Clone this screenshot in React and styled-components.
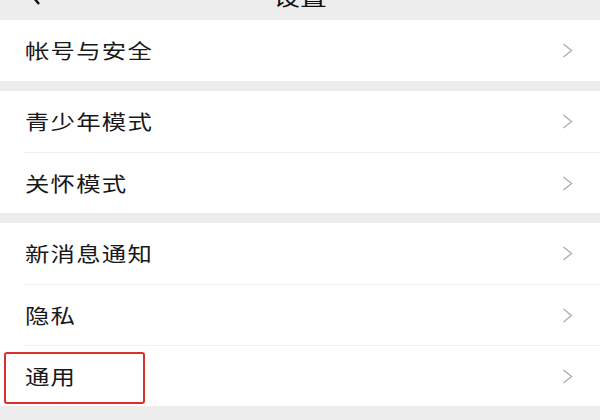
import React from 'react'
import styled, {createGlobalStyle} from 'styled-components'

const Global = createGlobalStyle`
  body {
    margin: 0;
    background: #ededed;
    font-family: "Noto Sans CJK SC", "Noto Sans", sans-serif;
  }
`

const Page = styled.div`
  width: 600px;
  height: 420px;
  overflow: hidden;
  background: #ededed;
`

// top bar, only its lower edge is in view
const Header = styled.div`
  height: 20px;
  overflow: hidden;
  display: flex;
  align-items: flex-end;
  padding: 0 0 14px 27px;
  box-sizing: border-box;
`

const Side = styled.div`
  flex: 1;
  display: flex;
  align-items: flex-end;
`

const Back = styled.svg`
  display: block;
  flex-shrink: 0;
  margin-bottom: 1px;
`

const Title = styled.div`
  font-size: 22px;
  line-height: 22px;
  color: #111;
  transform: scaleX(1.22);
  margin-left: -27px;
`

const Group = styled.div`
  background: #fff;
  margin-top: ${p => (p.$first ? '0' : '10px')};
`

const Row = styled.div`
  position: relative;
  padding-left: 24px;
`

const Inner = styled.div`
  height: 61px;
  box-sizing: border-box;
  display: flex;
  align-items: center;
  justify-content: space-between;
  padding: 0 27px 0 1px;
  border-top: ${p => (p.$divider ? '1px solid #efefef' : 'none')};
`

const Label = styled.span`
  font-size: 20px;
  letter-spacing: 1px;
  color: #191919;
  transform: scaleX(1.22);
  transform-origin: left center;
`

// red annotation box drawn over the row
const Mark = styled.div`
  position: absolute;
  left: 4px;
  top: 7px;
  width: 141px;
  height: 52px;
  box-sizing: border-box;
  border: 2px solid #dc2f29;
  border-radius: 3px;
`

const Chevron = () =>
  <svg width="11" height="15" viewBox="0 0 11 15">
    <polyline points="1.5,1 9.5,7.5 1.5,14" fill="none" stroke="#b3b3b3" strokeWidth="1.5" />
  </svg>

const groups = [
  ['帐号与安全'],
  ['青少年模式', '关怀模式'],
  ['新消息通知', '隐私', '通用'],
]

const App = () =>
<>
  <Global/>
  <Page>
    <Header>
      <Side>
        <Back width="14" height="26" viewBox="0 0 14 26">
          <polyline points="12,1 2,13 12,25" fill="none" stroke="#111" strokeWidth="2.5" />
        </Back>
      </Side>
      <Title>设置</Title>
      <Side/>
    </Header>
    {groups.map((items, gi) =>
      <Group key={gi} $first={gi === 0}>
        {items.map((text, i) =>
          <Row key={text}>
            <Inner $divider={i > 0}>
              <Label>{text}</Label>
              <Chevron/>
            </Inner>
            {text === '通用' && <Mark/>}
          </Row>
        )}
      </Group>
    )}
  </Page>
</>

export default App
